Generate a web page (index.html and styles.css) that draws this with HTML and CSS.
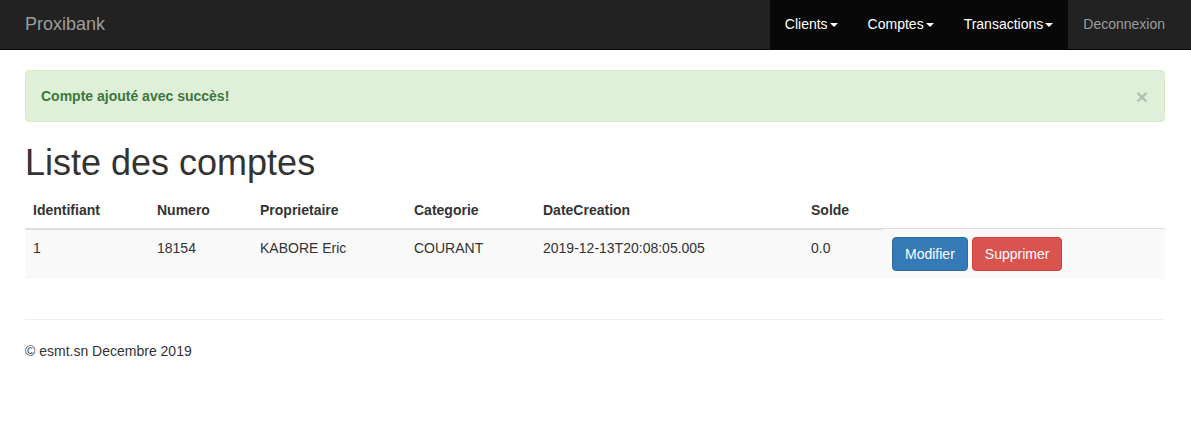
FILE: index.html
```html
<!DOCTYPE html>
<html lang="fr">
<head>
<meta charset="utf-8">
<title>Proxibank</title>
<link rel="stylesheet" href="styles.css">
</head>
<body>
<nav class="navbar">
  <a class="brand" href="#">Proxibank</a>
  <ul class="nav">
    <li class="nav-item open"><a href="#">Clients<span class="caret"></span></a></li>
    <li class="nav-item open"><a href="#">Comptes<span class="caret"></span></a></li>
    <li class="nav-item open"><a href="#">Transactions<span class="caret"></span></a></li>
    <li class="nav-item"><a href="#">Deconnexion</a></li>
  </ul>
</nav>
<main class="container">
  <div class="alert">
    <strong>Compte ajouté avec succès!</strong>
    <button class="close" type="button">&times;</button>
  </div>
  <h1 class="title">Liste des comptes</h1>
  <table class="table">
    <colgroup>
      <col class="c1"><col class="c2"><col class="c3"><col class="c4"><col class="c5"><col class="c6"><col class="c7">
    </colgroup>
    <thead>
      <tr>
        <th>Identifiant</th>
        <th>Numero</th>
        <th>Proprietaire</th>
        <th>Categorie</th>
        <th>DateCreation</th>
        <th>Solde</th>
      </tr>
    </thead>
    <tbody>
      <tr>
        <td>1</td>
        <td>18154</td>
        <td>KABORE Eric</td>
        <td>COURANT</td>
        <td>2019-12-13T20:08:05.005</td>
        <td>0.0</td>
        <td><div class="actions"><a class="btn btn-primary" href="#">Modifier</a><a class="btn btn-danger" href="#">Supprimer</a></div></td>
      </tr>
    </tbody>
  </table>
  <footer class="footer">
    <p>&copy; esmt.sn Decembre 2019</p>
  </footer>
</main>
</body>
</html>
```

FILE: styles.css
```css
* { box-sizing: border-box; }
html, body { margin: 0; padding: 0; }
body {
  font-family: "Liberation Sans", Arial, Helvetica, sans-serif;
  font-size: 14px;
  line-height: 20px;
  color: #333;
  background: #fff;
}
a { text-decoration: none; }

.navbar {
  height: 50px;
  background: #222;
  border-bottom: 1px solid #080808;
  display: flex;
  justify-content: space-between;
  align-items: stretch;
  padding: 0 11px 0 10px;
}
.brand {
  display: block;
  padding: 15px;
  font-size: 18px;
  line-height: 19px;
  color: #9d9d9d;
}
.nav {
  list-style: none;
  margin: 0;
  padding: 0;
  display: flex;
}
.nav-item a {
  display: block;
  padding: 14px 15px 15px;
  line-height: 20px;
  color: #9d9d9d;
  height: 49px;
}
.nav-item.open a {
  background: #080808;
  color: #fff;
}
.caret {
  display: inline-block;
  width: 0;
  height: 0;
  margin-left: 2px;
  vertical-align: middle;
  border-top: 4px solid #fff;
  border-right: 4px solid transparent;
  border-left: 4px solid transparent;
}

.container {
  padding: 0 26px 0 25px;
}
.alert {
  margin-top: 20px;
  margin-bottom: 20px;
  padding: 15px 16px 15px 15px;
  border: 1px solid #d6e9c6;
  border-radius: 4px;
  background: #dff0d8;
  color: #3c763d;
  display: flex;
  justify-content: space-between;
  align-items: center;
  height: 52px;
}
.close {
  border: 0;
  background: transparent;
  padding: 0;
  font-family: inherit;
  font-size: 21px;
  font-weight: bold;
  line-height: 1;
  color: #000;
  opacity: 0.2;
  cursor: pointer;
}
.title {
  margin: 21px 0 10px;
  font-size: 36px;
  font-weight: 500;
  line-height: 39.6px;
  color: #333;
}
.table {
  width: 100%;
  border-collapse: collapse;
  border-spacing: 0;
  margin-bottom: 20px;
  table-layout: fixed;
}
.c1 { width: 124px; }
.c2 { width: 103px; }
.c3 { width: 154px; }
.c4 { width: 129px; }
.c5 { width: 268px; }
.c6 { width: 79px; }
.table th {
  text-align: left;
  font-weight: bold;
  padding: 7px 8px 8px;
  line-height: 20px;
  vertical-align: bottom;
  border-bottom: 2px solid #ddd;
}
.table td {
  padding: 8px;
  line-height: 20px;
  vertical-align: top;
  border-top: 1px solid #ddd;
}
.table tbody tr { background: #f9f9f9; }
.actions {
  display: flex;
  gap: 4px;
  padding-left: 2px;
}
.btn {
  display: inline-block;
  padding: 6px 12px;
  font-size: 14px;
  line-height: 20px;
  border: 1px solid transparent;
  border-radius: 4px;
  color: #fff;
}
.btn-primary { background: #337ab7; border-color: #2e6da4; }
.btn-danger { background: #d9534f; border-color: #d43f3a; }

.footer {
  border-top: 1px solid #eee;
  margin-top: 40px;
  padding-top: 21px;
}
.footer p { margin: 0 0 10px; }
```
